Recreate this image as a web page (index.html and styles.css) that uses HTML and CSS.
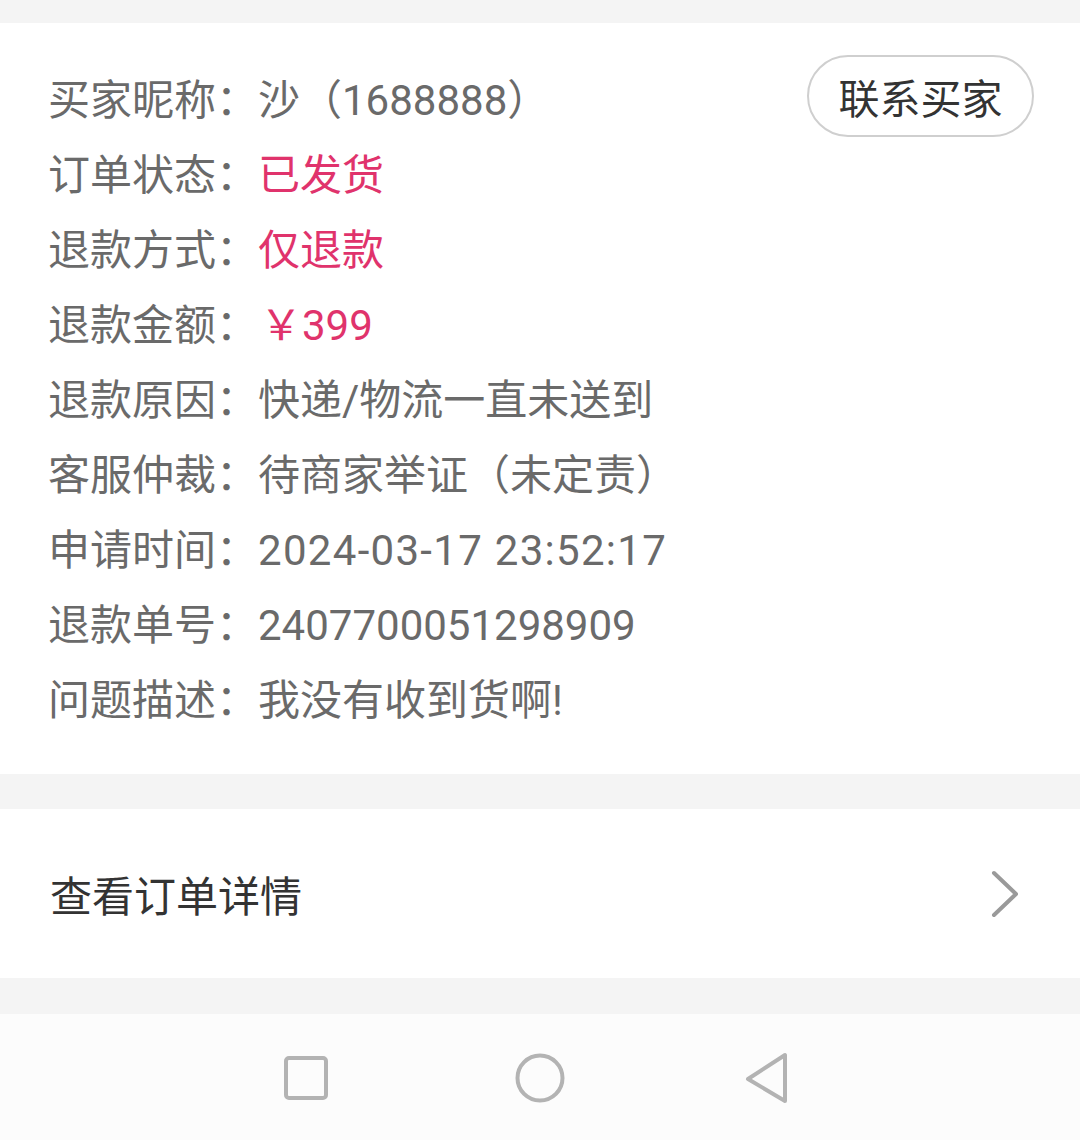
FILE: index.html
```html
<!DOCTYPE html>
<html lang="zh-CN">
<head>
  <meta charset="UTF-8">
  <title>退款详情</title>
  <link rel="stylesheet" href="styles.css">
</head>
<body>
  <div class="top-gap"></div>

  <div class="card info">
    <button class="contact-btn">联系买家</button>
    <div class="row"><span class="label">买家昵称：</span><span class="value">沙（1688888）</span></div>
    <div class="row"><span class="label">订单状态：</span><span class="value red">已发货</span></div>
    <div class="row"><span class="label">退款方式：</span><span class="value red">仅退款</span></div>
    <div class="row"><span class="label">退款金额：</span><span class="value red price">￥399</span></div>
    <div class="row"><span class="label">退款原因：</span><span class="value">快递/物流一直未送到</span></div>
    <div class="row"><span class="label">客服仲裁：</span><span class="value">待商家举证（未定责）</span></div>
    <div class="row"><span class="label">申请时间：</span><span class="value date">2024-03-17 23:52:17</span></div>
    <div class="row"><span class="label">退款单号：</span><span class="value">2407700051298909</span></div>
    <div class="row"><span class="label">问题描述：</span><span class="value">我没有收到货啊!</span></div>
  </div>

  <div class="gap"></div>

  <div class="card link-row">
    <span>查看订单详情</span>
    <svg class="chevron" width="30" height="50" viewBox="0 0 30 50">
      <path d="M4 4 L26 25 L4 46" fill="none" stroke="#9a9a9a" stroke-width="4" stroke-linecap="round" stroke-linejoin="round"/>
    </svg>
  </div>

  <div class="gap gap-last"></div>

  <div class="nav-bar">
    <svg class="nav-recent" width="46" height="46" viewBox="0 0 46 46">
      <rect x="3" y="3" width="40" height="40" rx="3" fill="none" stroke="#b3b3b3" stroke-width="4"/>
    </svg>
    <svg class="nav-home" width="52" height="52" viewBox="0 0 52 52">
      <circle cx="26" cy="26" r="22.5" fill="none" stroke="#b3b3b3" stroke-width="4"/>
    </svg>
    <svg class="nav-back" width="48" height="54" viewBox="0 0 48 54">
      <path d="M41 4 L41 50 L4 28 Z" fill="none" stroke="#b3b3b3" stroke-width="4" stroke-linejoin="round"/>
    </svg>
  </div>
</body>
</html>
```

FILE: styles.css
```css
body {
  margin: 0;
  padding: 0;
  background: #f4f4f4;
  font-family: Roboto, "Noto Sans CJK SC", sans-serif;
  width: 1080px;
  height: 1140px;
  overflow: hidden;
}
.top-gap {
  height: 23px;
}
.gap {
  height: 35px;
}
.gap-last {
  height: 36px;
}
.card {
  background: #fff;
}
.info {
  position: relative;
  padding: 40px 0 36px 48px;
}
.row {
  display: flex;
  font-size: 42px;
  line-height: 75px;
  color: #6a6a6a;
  white-space: nowrap;
}
.value {
  color: #6a6a6a;
}
.red {
  color: #e0336c;
}
.price {
  margin-left: 2px;
}
.date {
  letter-spacing: 1.3px;
}
.contact-btn {
  position: absolute;
  top: 32px;
  right: 46px;
  width: 227px;
  height: 82px;
  border: 2px solid #cfcfcf;
  border-radius: 41px;
  background: #fff;
  color: #333;
  font-family: "Noto Sans CJK SC", sans-serif;
  font-size: 41px;
  padding: 0;
}
.link-row {
  height: 169px;
  display: flex;
  align-items: center;
  justify-content: space-between;
  padding: 0 60px 0 50px;
  font-family: "Noto Sans CJK SC", sans-serif;
  font-size: 42px;
  color: #333;
}
.nav-bar {
  height: 127px;
  background: #fcfcfc;
  display: flex;
  align-items: center;
}
.nav-recent {
  margin-left: 283px;
}
.nav-home {
  margin-left: 185px;
}
.nav-back {
  margin-left: 178px;
}
```
